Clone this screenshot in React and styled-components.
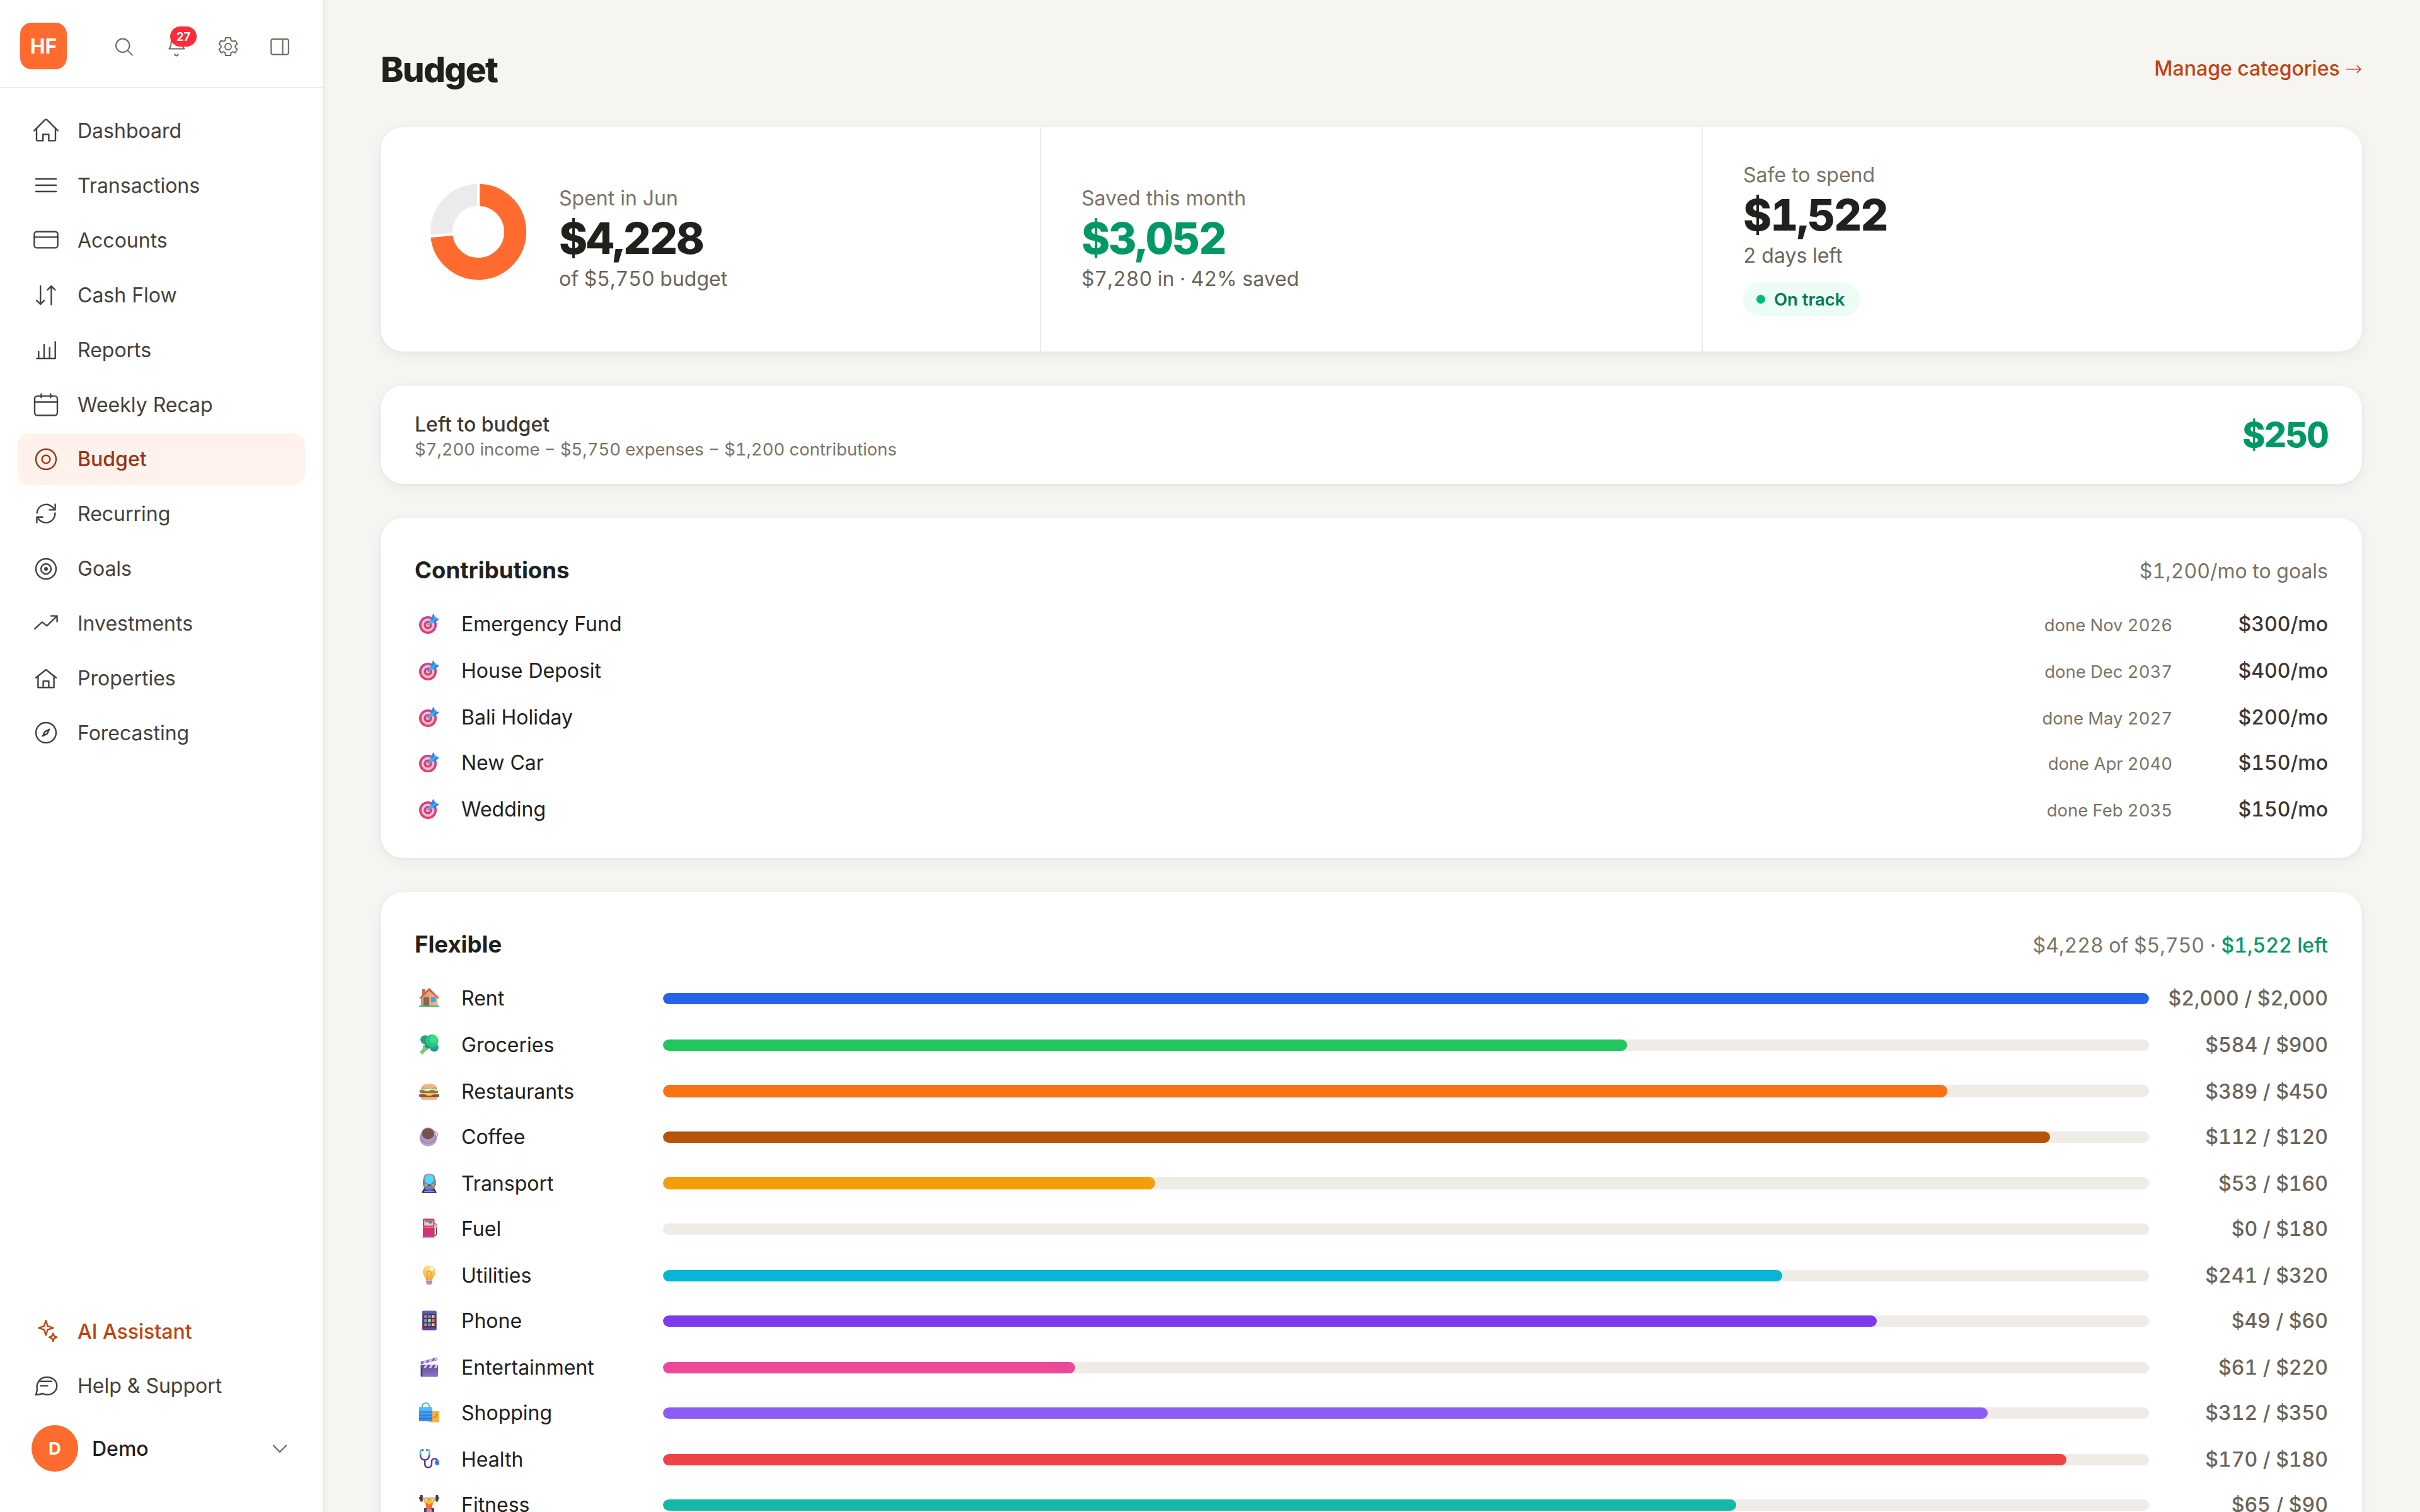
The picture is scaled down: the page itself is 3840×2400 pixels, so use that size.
import React from "react";
import styled, { createGlobalStyle } from "styled-components";

const GlobalStyle = createGlobalStyle`
  * { box-sizing: border-box; }
  html, body {
    margin: 0;
    padding: 0;
    background: #f6f5f1;
    overflow: hidden;
  }
  body {
    font-family: "Inter", "Liberation Sans", sans-serif;
    font-size: 32px;
    color: #21201c;
  }
`;

/* ---------- sidebar icons, drawn around 0,0 ---------- */
const navIcons = {
  home: (
    <>
      <path d="M-18.8 -.6L-2 -17.4Q0 -19.2 2 -17.4L18.8 -.6" />
      <path d="M-15 -4V14.2Q-15 15.4 -13.8 15.4H-4.8V5.2H4.4V15.4H13.8Q15 15.4 15 14.2V-4" />
    </>
  ),
  list: <path d="M-16 -10H16M-16 0H16M-16 10H16" />,
  card: (
    <>
      <rect x="-18.6" y="-13.2" width="37.2" height="25.6" rx="4" />
      <path d="M-18.6 -4.6H18.6" />
    </>
  ),
  flow: (
    <>
      <path d="M-8.8 -14V14.6M-14.8 8.9L-8.8 14.8L-2.8 8.9" />
      <path d="M8.4 15.2V-13.8M2.4 -7.8L8.4 -13.8L14.4 -7.8" />
    </>
  ),
  bars: (
    <path d="M-14.5 14H14.7V-12.6M-11.7 14V3M-3 14V-7.8M5.7 14V-3.2" />
  ),
  calendar: (
    <>
      <rect x="-18" y="-13.4" width="36" height="30.6" rx="4" />
      <path d="M-18 -3.8H18M-7.6 -16.6V-11M7.4 -16.6V-11" />
    </>
  ),
  budget: (
    <>
      <circle r="16" />
      <circle r="6.4" />
    </>
  ),
  recurring: (
    <>
      <path d="M-14.4 -1.6A14.6 14.6 0 0 1 13 -7.6" />
      <path d="M14.6 -15.6V-6.6H5.4" />
      <path d="M14.4 -1.6A14.6 14.6 0 0 1 -13 6" />
      <path d="M-14.6 13.6V4.8H-5.4" />
    </>
  ),
  goals: (
    <>
      <circle r="16" />
      <circle r="8" />
      <circle r="1.8" fill="currentColor" />
    </>
  ),
  trend: <path d="M-17.8 8.2L-6 -2.6L1.3 3.4L17 -11.6M8 -12.4H17.6V-3.2" />,
  property: (
    <>
      <path d="M-16 -1.2L0 -14L16 -1.2" />
      <path d="M-12.6 -3.4V14.2H12.6V-3.4M-4.4 14.2V4.2H4.4V14.2" />
    </>
  ),
  compass: (
    <>
      <circle r="16" />
      <path d="M5.2 -5.2L1.8 1.6L-5.2 5.2L-1.8 -1.6Z" />
    </>
  ),
  sparkle: (
    <>
      <path d="M-.2 -17L2.6 -8.1L11.5 -5.2L2.6 -2.4L-.2 6.3L-3 -2.4L-11.7 -5.2L-3 -8.1Z" />
      <path d="M11.2 3.6L13 7.8L17 9.6L13 11.4L11.2 15.8L9.4 11.4L5.2 9.6L9.4 7.8Z" />
    </>
  ),
  chat: (
    <>
      <path d="M-16.4 14C-14.2 10 -14 6 -14.4 2.4C-14.9 -7.4 -7.6 -14 1.4 -14C10.6 -14 17.2 -8 17.2 -.3C17.2 8 10.6 13.8 1.6 13.8C-.8 13.8 -3 13.2 -5 12C-8.4 13 -11.8 13.6 -16.4 14Z" />
      <path d="M-10.6 -7.2H9M-8.8 -.4H2.4" />
    </>
  ),
};

const NavIcon = ({ name }) => (
  <NavSvg viewBox="-23 -23 46 46">{navIcons[name]}</NavSvg>
);

/* ---------- category pictograms ---------- */
const Gradient = ({ id, from, to, flat }) => (
  <linearGradient id={id} x1="0" y1="0" x2={flat ? 1 : 0} y2={flat ? 0 : 1}>
    <stop offset="0" stopColor={from} />
    <stop offset="1" stopColor={to} />
  </linearGradient>
);

const emojis = {
  target: (
    <>
      <Gradient id="tg" from="#cf4186" to="#f2395e" />
      <circle cx="14" cy="18" r="14" fill="url(#tg)" />
      <circle cx="14" cy="18" r="10.4" fill="#d8c6e2" />
      <circle cx="14" cy="18" r="6.6" fill="url(#tg)" />
      <circle cx="14" cy="18" r="3" fill="#cdbbd8" />
      <path d="M14 18L18 14" stroke="#6c5a80" strokeWidth="1.6" />
      <path d="M15.4 15.6L16.4 10.6L26 4.6L28.4 7L21.4 15.6L17 17Z" fill="#3fb2f2" />
      <path d="M19 9.4L21 2.6L23.4 0L25 5.6L20.6 10.8ZM21.6 13L26.6 8L32 7.6L29.6 11L23.6 14.2Z" fill="#2f86ee" />
    </>
  ),
  house: (
    <>
      <Gradient id="hs" from="#c99a6c" to="#f0b88a" flat />
      <rect x="5" y="2" width="5" height="10" fill="#a87a55" />
      <path d="M3 14L16 3L29.5 14V28.5H3Z" fill="url(#hs)" />
      <path d="M0 16.4L15.4 .8Q16 .2 16.6 .8L32 16.2L29.6 17L16 4.4L2.2 17Z" fill="#e8503a" />
      <path d="M7 28V16.6Q7 15 8.6 15H14.6Q16 15 16 16.6V28Z" fill="#8a6258" />
      <rect x="19" y="15" width="7.4" height="7.4" rx=".6" fill="#35a7f0" />
      <rect x="0" y="28" width="32" height="2.2" rx="1" fill="#45b96b" />
    </>
  ),
  broccoli: (
    <>
      <Gradient id="br" from="#2fcb80" to="#1f8a92" />
      <path d="M6.6 17L17 18L15 23L10 26.6L5.4 32L.8 27.8L5.4 23Z" fill="#7cc97a" />
      <circle cx="9.4" cy="8.4" r="7.2" fill="#1fa583" />
      <circle cx="15" cy="16.4" r="6.2" fill="#1f9588" />
      <circle cx="24" cy="20.4" r="7" fill="url(#br)" />
      <circle cx="20.4" cy="10" r="10" fill="#2ac480" />
      <circle cx="23" cy="8" r="6.4" fill="#3adb8a" />
    </>
  ),
  burger: (
    <>
      <Gradient id="bg" from="#f1c28c" to="#d89a66" />
      <path d="M3 24.6H29V27.6Q29 30 26 30H6Q3 30 3 27.6Z" fill="#f6b88e" />
      <rect x="0" y="20.4" width="32" height="5.2" rx="2.6" fill="#87564a" />
      <path d="M2 18.4H30L18 23.2H14Z" fill="#fbca2d" />
      <rect x="1.6" y="15.6" width="28.6" height="3.4" rx="1.6" fill="#e0455c" />
      <path d="M0 15.6Q4 12 8 14.6T16 15T24 14.6T32 15.4L28 18.2L22 16.6L15 18.4L8 16.6L2 18Z" fill="#5d9e4b" />
      <path d="M3 13.6Q4 4 16 4T29 13.6Q16 12.6 3 13.6Z" fill="url(#bg)" />
      <path d="M10 8.4h1.4M15.4 6.4h1.4M20.6 8.4h1.4M13 11h1.4M18 11h1.4" stroke="#fff0d6" strokeWidth="1.4" />
    </>
  ),
  coffee: (
    <>
      <Gradient id="cf" from="#8c7ca6" to="#b7a5cf" />
      <circle cx="24.6" cy="13" r="4.4" fill="none" stroke="#a898c2" strokeWidth="2" />
      <ellipse cx="14.4" cy="18.6" rx="13.6" ry="13" fill="url(#cf)" />
      <ellipse cx="14.4" cy="12" rx="11.4" ry="10.4" fill="#b3a3ca" />
      <ellipse cx="14.2" cy="11.6" rx="9.8" ry="8.8" fill="#7d4f50" />
      <path d="M5 22Q12 31 24 24" stroke="#9584b2" strokeWidth="1" fill="none" />
    </>
  ),
  metro: (
    <>
      <Gradient id="mt" from="#93919c" to="#6e7fb0" />
      <path d="M9 24L5 31.4M23 24L27 31.4M8 27.4H24M5.4 30.6H26.6" stroke="#2c2148" strokeWidth="2" />
      <rect x="6" y="9" width="20.6" height="12" rx="3" fill="#4379ee" />
      <path d="M7 8Q7 1 16 1T25.4 8V20Q25.4 26.6 16 26.6T7 20Z" fill="url(#mt)" />
      <path d="M9.4 8Q9.4 3 16 3T23 8V11Q22 17 16 17T9.4 11Z" fill="#4fdcf8" />
      <circle cx="10.6" cy="19.6" r="1.8" fill="#f7a922" />
      <circle cx="21.6" cy="19.6" r="1.8" fill="#f7a922" />
      <path d="M14 19.2H18.4" stroke="#3a3147" strokeWidth="1.2" />
      <path d="M10 25.6Q16 28.8 22.6 25.6" stroke="#4358f2" strokeWidth="2.4" fill="none" />
    </>
  ),
  fuel: (
    <>
      <Gradient id="fu" from="#ea3440" to="#cf3388" />
      <path d="M24.6 7L27.6 10V24Q27.6 27 25.4 27T23.6 24V16H20.6" stroke="#4a4052" strokeWidth="1.6" fill="none" />
      <path d="M24.4 6.6L28.4 10.4V15L25 13Z" fill="#c8bccb" />
      <rect x="6" y=".6" width="18.4" height="30" rx="1.6" fill="url(#fu)" />
      <rect x="8.2" y="3" width="14" height="8.4" rx=".6" fill="#d6cfdd" />
      <path d="M9 4.2H21.6M15 7H20.6" stroke="#5a4a60" strokeWidth="1.4" />
      <path d="M6 14H24.4" stroke="#f4899a" strokeWidth="1.4" />
      <rect x="5" y="29.4" width="20" height="1.8" rx=".8" fill="#cbb4ce" />
    </>
  ),
  bulb: (
    <>
      <Gradient id="bl" from="#ffe07a" to="#f9a93e" />
      <path d="M16 .8C22 .8 26 5 26 11C26 16 22.4 18.6 20.6 24.4H11.4C9.6 18.6 6 16 6 11C6 5 10 .8 16 .8Z" fill="url(#bl)" />
      <path d="M13.4 24V17Q11 13.6 12.4 11.4Q16 8.4 19.6 11.4Q21 13.6 18.6 17V24" fill="none" stroke="#f08d2c" strokeWidth="1" />
      <circle cx="19.6" cy="6.4" r="3.4" fill="#fff" opacity=".75" />
      <path d="M11.4 24.4H20.6V29L18 31.4H14L11.4 29Z" fill="#b3a4ba" />
      <path d="M11.4 26.4L20.6 25.4M11.4 29L20.6 28" stroke="#87718f" strokeWidth="1" />
    </>
  ),
  phone: (
    <>
      <Gradient id="ph" from="#5e62b4" to="#713f96" />
      <rect x="4.8" y=".6" width="23" height="31" rx="2.6" fill="url(#ph)" />
      <rect x="6.2" y="5" width="20.2" height="22.6" fill="#4a3574" />
      {["#ff7a3d", "#2fb6f7", "#ffd84a", "#2fb6f7", "#ffd84a", "#ff7a3d", "#ff7a3d", "#2fb6f7", "#ffd84a"].map(
        (fill, i) => (
          <rect key={i} x={8.2 + (i % 3) * 6} y={7.4 + Math.floor(i / 3) * 6.6} width="4.2" height="4.4" rx=".6" fill={fill} />
        )
      )}
    </>
  ),
  film: (
    <>
      <Gradient id="fl" from="#6a4a92" to="#8379c6" />
      <path d="M2.4 7.4L28.4 .4L29.4 5L4 11.2Q2.6 11 2.4 7.4Z" fill="#8261b0" />
      <path d="M8 6L13 4.6L10.6 9.4L6 10.6ZM17 3.6L22 2.4L19.4 7.2L14.6 8.4ZM26 1.4L28.8 2L28 5L23.6 6Z" fill="#cfc4f4" />
      <path d="M2.6 12.6H30V29.6Q30 31.4 28.4 31.4H4.4Q2.6 31.4 2.6 29.6Z" fill="url(#fl)" />
      <rect x="2.6" y="12.6" width="27.4" height="4.8" fill="#6d4c98" />
      <path d="M9.6 12.6H13.6L11 17.4H7ZM18 12.6H22L19.4 17.4H15.4ZM26 12.6H30L27.6 17.4H23.6Z" fill="#cfc8fa" />
      <path d="M4 17.4V31" stroke="#4b3470" strokeWidth="2.4" />
    </>
  ),
  bags: (
    <>
      <Gradient id="bb" from="#5fc2fa" to="#2f86e8" />
      <rect x="15" y="14" width="17" height="17.6" rx=".8" fill="#fbb040" />
      <path d="M28.6 16Q28.6 24 21 23.6" stroke="#e8643c" strokeWidth="1.4" fill="none" />
      <path d="M5 8V7Q5 1 10.6 1T16.4 7V8" stroke="#3a9bea" strokeWidth="1.6" fill="none" />
      <rect x="0" y="7" width="21" height="22.8" rx="1" fill="url(#bb)" />
      <path d="M0 15.4H21M0 20.4H21M0 25.2H21" stroke="#2577d8" strokeWidth="1.6" />
    </>
  ),
  stethoscope: (
    <>
      <path d="M2 8Q2 17.4 9 17.4T16.4 8M9.2 17.4V24Q9.2 29.2 14.4 29.2T20 24V20Q20 15.4 24.6 15.4T29.2 20" fill="none" stroke="#5b34a0" strokeWidth="2.4" />
      <path d="M5.4 1.6H3.6Q2 1.6 2 4V10M13 1.6H14.8Q16.4 1.6 16.4 4V10" fill="none" stroke="#43b9f6" strokeWidth="2.4" />
      <path d="M6 .4V3M12.4 .4V3" stroke="#3a2a60" strokeWidth="2" />
      <circle cx="28.8" cy="21.8" r="4" fill="#3390fa" />
      <circle cx="28.8" cy="21.8" r="1.8" fill="#2468e2" />
    </>
  ),
  lifter: (
    <>
      <path d="M6 6H26" stroke="#8d8794" strokeWidth="1.4" />
      <path d="M7.4 7L12 16M24.6 7L20 16" stroke="#fbb827" strokeWidth="3.4" strokeLinecap="round" />
      <rect x="1.6" y="1" width="4.2" height="10.4" rx="1.2" fill="#43394f" />
      <rect x="26.2" y="1" width="4.2" height="10.4" rx="1.2" fill="#43394f" />
      <path d="M0 6H2M30 6H32" stroke="#43394f" strokeWidth="3" />
      <path d="M10.6 14H21.4L20.4 24H11.6Z" fill="#fb6a2c" />
      <circle cx="16" cy="11.6" r="4.2" fill="#fcc231" />
      <path d="M12 10Q16 5.4 20 10" stroke="#f39a1c" strokeWidth="2" fill="none" />
      <path d="M8 22H13L12 28H8ZM19 22H24V28H20Z" fill="#4a3d58" />
      <path d="M8 28L10 32H22L24 28Z" fill="#fcbf2c" />
      <rect x="11.6" y="23.4" width="9" height="6" fill="#a696b2" />
    </>
  ),
};

const Emoji = ({ name }) => <EmojiSvg viewBox="0 0 32 32">{emojis[name]}</EmojiSvg>;

/* ---------- data ---------- */
const navItems = [
  { icon: "home", label: "Dashboard" },
  { icon: "list", label: "Transactions" },
  { icon: "card", label: "Accounts" },
  { icon: "flow", label: "Cash Flow" },
  { icon: "bars", label: "Reports" },
  { icon: "calendar", label: "Weekly Recap" },
  { icon: "budget", label: "Budget", active: true },
  { icon: "recurring", label: "Recurring" },
  { icon: "goals", label: "Goals" },
  { icon: "trend", label: "Investments" },
  { icon: "property", label: "Properties" },
  { icon: "compass", label: "Forecasting" },
];

const contributions = [
  { name: "Emergency Fund", done: "done Nov 2026", amount: "$300/mo" },
  { name: "House Deposit", done: "done Dec 2037", amount: "$400/mo" },
  { name: "Bali Holiday", done: "done May 2027", amount: "$200/mo" },
  { name: "New Car", done: "done Apr 2040", amount: "$150/mo" },
  { name: "Wedding", done: "done Feb 2035", amount: "$150/mo" },
];

const categories = [
  { emoji: "house", name: "Rent", spent: 2000, budget: 2000, color: "#2563eb" },
  { emoji: "broccoli", name: "Groceries", spent: 584, budget: 900, color: "#22c55e" },
  { emoji: "burger", name: "Restaurants", spent: 389, budget: 450, color: "#f97316" },
  { emoji: "coffee", name: "Coffee", spent: 112, budget: 120, color: "#b45309" },
  { emoji: "metro", name: "Transport", spent: 53, budget: 160, color: "#f59e0b" },
  { emoji: "fuel", name: "Fuel", spent: 0, budget: 180, color: "#dc2626" },
  { emoji: "bulb", name: "Utilities", spent: 241, budget: 320, color: "#06b6d4" },
  { emoji: "phone", name: "Phone", spent: 49, budget: 60, color: "#7c3aed" },
  { emoji: "film", name: "Entertainment", spent: 61, budget: 220, color: "#ec4899" },
  { emoji: "bags", name: "Shopping", spent: 312, budget: 350, color: "#8b5cf6" },
  { emoji: "stethoscope", name: "Health", spent: 170, budget: 180, color: "#ef4444" },
  { emoji: "lifter", name: "Fitness", spent: 65, budget: 90, color: "#14b8a6" },
];

const money = (n) => `$${n.toLocaleString("en-US")}`;

const Donut = ({ value }) => {
  const r = 58.6;
  const end = value * Math.PI * 2;
  const point = (a, radius) =>
    `${(Math.sin(a) * radius).toFixed(2)} ${(-Math.cos(a) * radius).toFixed(2)}`;
  return (
    <DonutSvg viewBox="-92 -92 184 184">
      <g fill="none" strokeWidth="35">
        <path d={`M0 ${-r}A${r} ${r} 0 1 1 ${point(end, r)}`} stroke="#ff6b2e" />
        <path d={`M${point(end, r)}A${r} ${r} 0 0 1 0 ${-r}`} stroke="#ebebed" />
      </g>
      <path d={`M0 0V-80M0 0L${point(end, 80)}`} stroke="#fff" strokeWidth="4.4" />
    </DonutSvg>
  );
};

const Sidebar = () => (
  <SidebarWrapper>
    <SidebarHeader>
      <Logo>HF</Logo>
      <HeaderButtons>
        <HeaderButton>
          <svg viewBox="-20 -20 40 40">
            <circle cx="-3.3" cy="-1.7" r="10.7" />
            <path d="M4.5 6.1L12 13.6" />
          </svg>
        </HeaderButton>
        <HeaderButton>
          <svg viewBox="-20 -20 40 40">
            <path d="M-11.7 3.4H12.3Q9 0 9 -7Q8 -15 0 -15T-8.4 -7Q-8.4 0 -11.7 3.4Z" />
            <path d="M-2.6 12Q-2.2 14.4 0 14.4T2.6 12" />
          </svg>
          <Count>27</Count>
        </HeaderButton>
        <HeaderButton>
          <svg viewBox="-20 -20 40 40">
            <path d="M-4 -14H4L4.6 -9.8L7.4 -8.2L11.2 -9.8L14.4 -4.2L11.4 -1.6V1.6L14.4 4.2L11.2 9.8L7.4 8.2L4.6 9.8L4 14H-4L-4.6 9.8L-7.4 8.2L-11.2 9.8L-14.4 4.2L-11.4 1.6V-1.6L-14.4 -4.2L-11.2 -9.8L-7.4 -8.2L-4.6 -9.8Z" />
            <circle r="5" />
          </svg>
        </HeaderButton>
        <HeaderButton>
          <svg viewBox="-20 -20 40 40">
            <rect x="-13.8" y="-12" width="27.6" height="24.4" rx="3" />
            <path d="M4.6 -12V12.4" />
          </svg>
        </HeaderButton>
      </HeaderButtons>
    </SidebarHeader>
    <Nav>
      {navItems.map((item) => (
        <NavItem key={item.label} $active={item.active}>
          <NavIcon name={item.icon} />
          {item.label}
        </NavItem>
      ))}
    </Nav>
    <SidebarFooter>
      <NavItem $accent>
        <NavIcon name="sparkle" />
        AI Assistant
      </NavItem>
      <NavItem>
        <NavIcon name="chat" />
        Help &amp; Support
      </NavItem>
      <Profile>
        <Avatar>D</Avatar>
        <ProfileName>Demo</ProfileName>
        <Chevron viewBox="0 0 24 14">
          <path d="M2 2.6L12 12.8L22 2.6" />
        </Chevron>
      </Profile>
    </SidebarFooter>
  </SidebarWrapper>
);

const App = () => {
  return (
    <>
      <GlobalStyle />
      <Page>
        <Sidebar />
        <Main>
          <TitleBar>
            <Title>Budget</Title>
            <ManageLink>
              Manage categories <Arrow>→</Arrow>
            </ManageLink>
          </TitleBar>

          <SummaryCard>
            <SummaryCell>
              <Donut value={4228 / 5750} />
              <div>
                <StatLabel>Spent in Jun</StatLabel>
                <StatValue>$4,228</StatValue>
                <StatNote>of $5,750 budget</StatNote>
              </div>
            </SummaryCell>
            <SummaryCell>
              <div>
                <StatLabel>Saved this month</StatLabel>
                <StatValue $positive>$3,052</StatValue>
                <StatNote>$7,280 in · 42% saved</StatNote>
              </div>
            </SummaryCell>
            <SummaryCell>
              <div>
                <StatLabel>Safe to spend</StatLabel>
                <StatValue>$1,522</StatValue>
                <StatNote>2 days left</StatNote>
                <StatusPill>On track</StatusPill>
              </div>
            </SummaryCell>
          </SummaryCard>

          <LeftCard>
            <div>
              <LeftTitle>Left to budget</LeftTitle>
              <LeftNote>
                $7,200 income − $5,750 expenses − $1,200 contributions
              </LeftNote>
            </div>
            <LeftAmount>$250</LeftAmount>
          </LeftCard>

          <ListCard>
            <ListHeader>
              <ListTitle>Contributions</ListTitle>
              <ListTotal>$1,200/mo to goals</ListTotal>
            </ListHeader>
            <div>
              {contributions.map((item) => (
                <ContributionRow key={item.name}>
                  <Emoji name="target" />
                  <Name>{item.name}</Name>
                  <DoneDate>{item.done}</DoneDate>
                  <Amount>{item.amount}</Amount>
                </ContributionRow>
              ))}
            </div>
          </ListCard>

          <ListCard>
            <ListHeader>
              <ListTitle>Flexible</ListTitle>
              <ListTotal>
                $4,228 of $5,750 · <strong>$1,522 left</strong>
              </ListTotal>
            </ListHeader>
            <div>
              {categories.map((item) => (
                <CategoryRow key={item.name}>
                  <Emoji name={item.emoji} />
                  <Name>{item.name}</Name>
                  <Track>
                    <Fill
                      $color={item.color}
                      style={{ width: `${(item.spent / item.budget) * 100}%` }}
                    />
                  </Track>
                  <Spent>
                    {money(item.spent)} / {money(item.budget)}
                  </Spent>
                </CategoryRow>
              ))}
            </div>
          </ListCard>
        </Main>
      </Page>
    </>
  );
};

export default App;

const Page = styled.div`
  display: flex;
  width: 3840px;
  height: 2400px;
  overflow: hidden;
`;

const SidebarWrapper = styled.aside`
  display: flex;
  flex-direction: column;
  flex: none;
  width: 514px;
  height: 100%;
  background: #fff;
  border-right: 2px solid #ebe9e4;
  box-shadow: 2px 0 8px rgba(40, 36, 28, 0.04);
`;

const SidebarHeader = styled.div`
  display: flex;
  justify-content: space-between;
  height: 140px;
  padding: 36px 27px 0 32px;
  border-bottom: 2px solid #efece8;
`;

const Logo = styled.div`
  display: flex;
  align-items: center;
  justify-content: center;
  width: 74px;
  height: 74px;
  border-radius: 18px;
  background: #ff6b2e;
  color: #fff;
  font-size: 32px;
  font-weight: 700;
`;

const HeaderButtons = styled.div`
  display: flex;
  height: 76px;
`;

const HeaderButton = styled.div`
  position: relative;
  display: flex;
  align-items: center;
  justify-content: center;
  width: 82px;
  svg {
    width: 40px;
    height: 40px;
    fill: none;
    stroke: #6e675b;
    stroke-width: 2;
    stroke-linecap: round;
    stroke-linejoin: round;
  }
`;

const Count = styled.span`
  position: absolute;
  left: 31px;
  top: 6px;
  width: 42px;
  height: 32px;
  border-radius: 16px;
  background: #fb2c36;
  color: #fff;
  font-size: 18.3px;
  font-weight: 700;
  line-height: 32px;
  text-align: center;
`;

const Nav = styled.nav`
  display: flex;
  flex-direction: column;
  flex: 1;
  gap: 4.9px;
  padding: 26.6px 28px 0;
`;

const NavItem = styled.div`
  display: flex;
  align-items: center;
  gap: 27px;
  height: 82px;
  padding-left: 22px;
  border-radius: 18px;
  font-size: 32px;
  font-weight: ${({ $active, $accent }) => ($active || $accent ? 500 : 400)};
  color: ${({ $active, $accent }) =>
    $active ? "#9a3412" : $accent ? "#c2410c" : "#45403b"};
  background: ${({ $active }) => ($active ? "#fff1ec" : "transparent")};
`;

const NavSvg = styled.svg`
  flex: none;
  width: 46px;
  height: 46px;
  fill: none;
  stroke: currentColor;
  stroke-width: 2.4;
  stroke-linecap: round;
  stroke-linejoin: round;
`;

const SidebarFooter = styled.div`
  display: flex;
  flex-direction: column;
  gap: 4.6px;
  height: 328px;
  padding: 0 28px;
`;

const Profile = styled.div`
  display: flex;
  align-items: center;
  gap: 22px;
  height: 82px;
  margin-top: 13px;
  padding: 0 28px 0 22px;
`;

const Avatar = styled.div`
  display: flex;
  align-items: center;
  justify-content: center;
  width: 74px;
  height: 74px;
  border-radius: 50%;
  background: #ff6b2e;
  color: #fff;
  font-size: 27.4px;
  font-weight: 700;
`;

const ProfileName = styled.span`
  flex: 1;
  font-weight: 500;
`;

const Chevron = styled.svg`
  width: 24px;
  height: 14px;
  fill: none;
  stroke: #6e675b;
  stroke-width: 2.2;
  stroke-linecap: round;
  stroke-linejoin: round;
`;

const Main = styled.main`
  flex: 1;
  display: flex;
  flex-direction: column;
  gap: 54px;
  padding: 77px 92px 0 90px;
`;

const TitleBar = styled.div`
  display: flex;
  align-items: center;
  justify-content: space-between;
  height: 66px;
  margin-bottom: 5px;
`;

const Title = styled.h1`
  margin: 0;
  font-size: 54.86px;
  font-weight: 800;
  line-height: 66px;
  letter-spacing: -0.03em;
`;

const ManageLink = styled.a`
  padding-bottom: 2px;
  font-weight: 500;
  line-height: 46px;
  color: #c2410c;
`;

const Arrow = styled.span`
  font-family: "DejaVu Sans Light", "DejaVu Sans", sans-serif;
  font-weight: 200;
  line-height: 1;
`;

const Card = styled.section`
  flex: none;
  background: #fff;
  border-radius: 36px;
  box-shadow: 0 2px 6px rgba(40, 36, 28, 0.05),
    0 6px 28px rgba(40, 36, 28, 0.05);
`;

const SummaryCard = styled(Card)`
  display: grid;
  grid-template-columns: 1046px 1048px 1046px;
  gap: 2px;
  height: 356px;
`;

const SummaryCell = styled.div`
  display: flex;
  align-items: center;
  gap: 36px;
  padding: 0 64px 3px;
  & + & {
    box-shadow: -2px 0 0 #efece8;
  }
`;

const DonutSvg = styled.svg`
  width: 184px;
  height: 184px;
  margin: 0 0 21px -1px;
`;

const StatLabel = styled.div`
  margin-bottom: 1px;
  line-height: 46px;
  color: #7a7366;
`;

const StatValue = styled.div`
  margin-bottom: 1px;
  font-size: 68.57px;
  font-weight: 800;
  line-height: 80px;
  letter-spacing: -0.03em;
  font-variant-numeric: tabular-nums;
  color: ${({ $positive }) => ($positive ? "#009966" : "#21201c")};
`;

const StatNote = styled.div`
  line-height: 46px;
  font-variant-numeric: tabular-nums;
  color: #6b6458;
`;

const StatusPill = styled.div`
  display: flex;
  align-items: center;
  gap: 14px;
  width: fit-content;
  height: 54px;
  margin-top: 19px;
  padding: 0 24px 0 21px;
  border-radius: 27px;
  background: #ecfdf5;
  color: #007a55;
  font-size: 27.43px;
  font-weight: 600;
  &::before {
    content: "";
    width: 14px;
    height: 14px;
    border-radius: 50%;
    background: #00bc7d;
  }
`;

const LeftCard = styled(Card)`
  display: flex;
  align-items: center;
  justify-content: space-between;
  height: 156px;
  padding: 0 54px;
`;

const LeftTitle = styled.div`
  padding-top: 1px;
  font-weight: 500;
  line-height: 45px;
  color: #3b3732;
`;

const LeftNote = styled.div`
  font-size: 27.43px;
  line-height: 35px;
  font-variant-numeric: tabular-nums;
  color: #7a7366;
`;

const LeftAmount = styled.div`
  font-size: 54.86px;
  font-weight: 800;
  letter-spacing: -0.03em;
  font-variant-numeric: tabular-nums;
  color: #009966;
`;

const ListCard = styled(Card)`
  padding: 56px 54px 28px;
`;

const ListHeader = styled.div`
  display: flex;
  align-items: baseline;
  justify-content: space-between;
  height: 90px;
`;

const ListTitle = styled.h2`
  margin: 0;
  font-size: 36.57px;
  font-weight: 700;
  line-height: 54px;
`;

const ListTotal = styled.span`
  font-variant-numeric: tabular-nums;
  color: #7a7366;
  strong {
    font-weight: 500;
    color: #009966;
  }
`;

const Row = styled.div`
  display: grid;
  column-gap: 27px;
  align-items: start;
  height: 72px;
  line-height: 45px;
  &:first-child,
  &:nth-child(even) {
    height: 74px;
  }
`;

const ContributionRow = styled(Row)`
  grid-template-columns: 47px 1fr auto 220px;
`;

const CategoryRow = styled(Row)`
  grid-template-columns: 47px 293px 1fr 257px;
`;

const EmojiSvg = styled.svg`
  width: 32px;
  height: 32px;
  margin: 6px 7px 0;
`;

const Name = styled.span`
  white-space: nowrap;
`;

const DoneDate = styled.span`
  padding-top: 2px;
  font-size: 27.43px;
  font-variant-numeric: tabular-nums;
  color: #7a7366;
`;

const Amount = styled.span`
  font-weight: 500;
  text-align: right;
  font-variant-numeric: tabular-nums;
  color: #3b3732;
`;

const Spent = styled.span`
  font-weight: 500;
  text-align: right;
  white-space: nowrap;
  font-variant-numeric: tabular-nums;
  color: #6b6458;
`;

const Track = styled.div`
  height: 18px;
  margin-top: 14px;
  border-radius: 10px;
  background: #efebe7;
  overflow: hidden;
  ${CategoryRow}:nth-child(3) &,
  ${CategoryRow}:nth-child(5) & {
    height: 20px;
    margin-top: 12px;
  }
`;

const Fill = styled.div`
  height: 100%;
  border-radius: 10px;
  background: ${({ $color }) => $color};
`;
